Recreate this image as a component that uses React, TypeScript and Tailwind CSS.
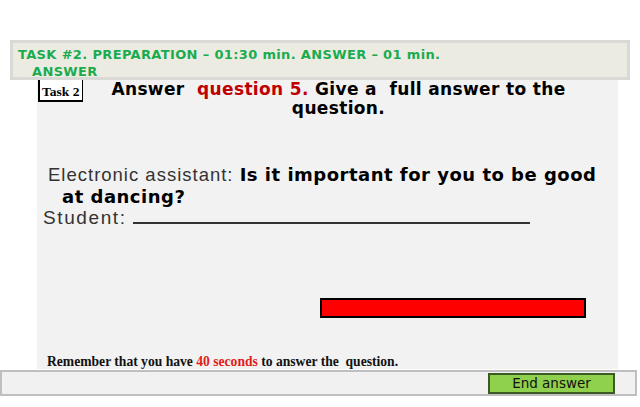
import React from "react";

export default function App() {
  return (
    <div className="w-[640px] h-[407px] bg-white overflow-hidden relative">
      <div className="h-[40px]" />
      <div className="ml-[10px] w-[620px] h-[40px] bg-[#ecebe2] border-[3px] border-[#d9d9d6] relative z-10 px-[5px] pt-[3px] font-['DejaVu_Sans',sans-serif] font-bold text-[13px] tracking-[0.35px] leading-[17px] text-[#1aab4e]">
        <div>TASK #2. PREPARATION – 01:30 min. ANSWER – 01 min.</div>
        <div className="pl-[14px]">ANSWER</div>
      </div>
      <div className="ml-[37px] w-[581px] h-[289px] bg-[#f2f2f2] relative">
        <div className="flex">
          <div className="ml-[1px] w-[45px] h-[22px] border-l-2 border-b-2 border-r border-black bg-white font-['Liberation_Serif',serif] font-bold text-[13.5px] leading-[20px] pl-[2px] pt-[2px] whitespace-nowrap">
            Task 2
          </div>
          <div className="flex-1 pl-[0px] pr-[24px] text-center font-['DejaVu_Sans',sans-serif] font-bold text-[17px] tracking-[0.35px] leading-[19px] text-black">
            Answer&nbsp; <span className="text-[#c00000]">question 5.</span> Give a&nbsp; full answer to the question.
          </div>
        </div>
        <div className="mt-[46px] pl-[6px]">
          <div className="pl-[5px] leading-[21px] whitespace-nowrap">
            <span className="font-['Liberation_Sans',sans-serif] text-[18.5px] tracking-[1px] text-[#333333]">Electronic assistant: </span>
            <span className="font-['DejaVu_Sans',sans-serif] font-bold text-[18px] tracking-[0.5px] text-black">Is it important for you to be good</span>
          </div>
          <div className="pl-[19px] leading-[21px] font-['DejaVu_Sans',sans-serif] font-bold text-[18px] tracking-[0.5px] text-black">at dancing?</div>
          <div className="leading-[22px] font-['Liberation_Sans',sans-serif] text-[19px] tracking-[1.6px] text-[#333333] flex items-baseline">
            <span>Student:</span>
            <span className="ml-[6px] mb-[-4px] inline-block w-[397px] border-b-2 border-[#333333] h-[16px]" />
          </div>
        </div>
        <div className="mt-[69px] ml-[283px] w-[266px] h-[20px] bg-[#ff0000] border-2 border-black" />
        <div className="mt-[36px] pl-[10px] font-['Liberation_Serif',serif] font-bold text-[13.6px] leading-[16px] text-[#111]">
          Remember that you have <span className="text-[#e31b1b]">40 seconds</span> to answer the&nbsp; question.
        </div>
      </div>
      <div className="mt-[1px] w-[637px] h-[26px] bg-[#f1f1f1] border-2 border-[#bfbfbf] flex items-center">
        <div className="ml-[486px] w-[127px] h-[21px] mt-[1px] bg-[#8fd04c] border-2 border-[#3d5a24] flex items-center justify-center font-['DejaVu_Sans',sans-serif] text-[13.5px] text-[#111]">
          End answer
        </div>
      </div>
    </div>
  );
}
